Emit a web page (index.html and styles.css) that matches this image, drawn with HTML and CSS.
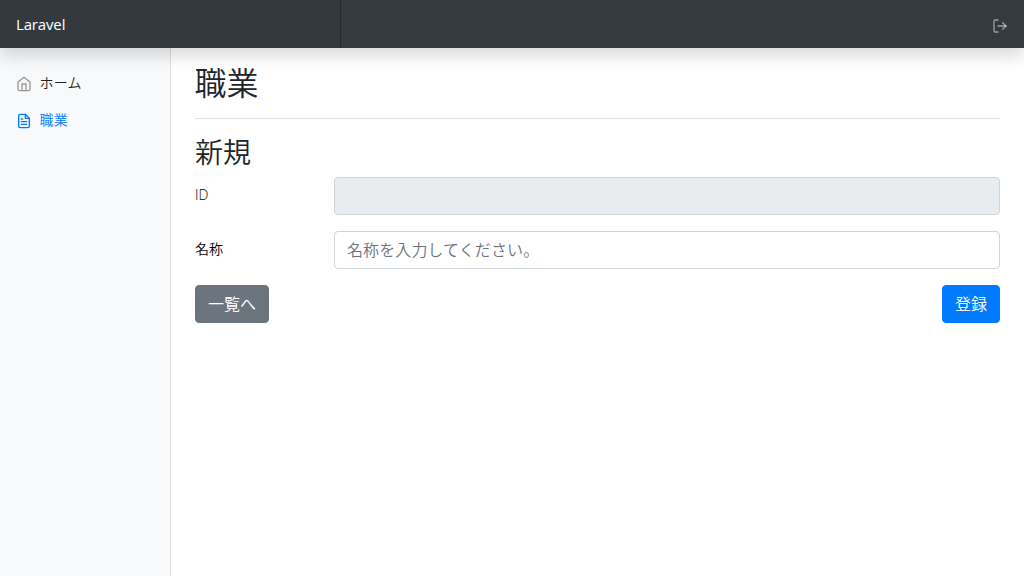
FILE: index.html
```html
<!DOCTYPE html>
<html lang="ja">
<head>
<meta charset="utf-8">
<title>Laravel</title>
<link rel="stylesheet" href="styles.css">
</head>
<body>
<nav class="navbar">
  <a class="brand">Laravel</a>
  <a class="logout" aria-label="Logout"><svg class="icon" viewBox="0 0 24 24"><path d="M9 21H5a2 2 0 0 1-2-2V5a2 2 0 0 1 2-2h4"/><polyline points="16 17 21 12 16 7"/><line x1="21" y1="12" x2="9" y2="12"/></svg></a>
</nav>
<div class="layout">
  <aside class="sidebar">
    <a class="nav-link"><svg class="icon" viewBox="0 0 24 24"><path d="M3 9l9-7 9 7v11a2 2 0 0 1-2 2H5a2 2 0 0 1-2-2z"/><polyline points="9 22 9 12 15 12 15 22"/></svg><span>ホーム</span></a>
    <a class="nav-link active"><svg class="icon" viewBox="0 0 24 24"><path d="M14 2H6a2 2 0 0 0-2 2v16a2 2 0 0 0 2 2h12a2 2 0 0 0 2-2V8z"/><polyline points="14 2 14 8 20 8"/><line x1="16" y1="13" x2="8" y2="13"/><line x1="16" y1="17" x2="8" y2="17"/><polyline points="10 9 9 9 8 9"/></svg><span>職業</span></a>
  </aside>
  <main class="main">
    <h1 class="title">職業</h1>
    <h2 class="subtitle">新規</h2>
    <form class="form">
      <div class="row"><label class="label" for="id">ID</label><input class="control" id="id" readonly></div>
      <div class="row"><label class="label" for="name">名称</label><input class="control" id="name" placeholder="名称を入力してください。"></div>
      <div class="actions"><button class="btn secondary" type="button">一覧へ</button><button class="btn primary" type="button">登録</button></div>
    </form>
  </main>
</div>
</body>
</html>
```
FILE: styles.css
```css
* { box-sizing: border-box; }
body { margin: 0; height: 100vh; overflow: hidden; display: flex; flex-direction: column; background: #fff; color: #212529; font-family: "Open Sans", "Noto Sans CJK JP", sans-serif; font-size: 14px; font-weight: 350; line-height: 21px; }
.navbar { position: relative; z-index: 1; display: flex; justify-content: space-between; flex: 0 0 48px; background: #343a40; box-shadow: 0 8px 16px rgba(0,0,0,.15); }
.brand { width: 341px; padding: 12px 16px; color: #fff; font-size: 15px; font-weight: 500; line-height: 24px; letter-spacing: -.15px; background: rgba(0,0,0,.01); box-shadow: inset -1px 0 0 rgba(0,0,0,.25); }
.logout { padding: 18px 16px 0; color: rgba(255,255,255,.5); }
.icon { display: block; width: 16px; height: 16px; fill: none; stroke: currentColor; stroke-width: 2; stroke-linecap: round; stroke-linejoin: round; }
.layout { display: flex; flex: 1; }
.sidebar { flex: 0 0 171px; padding-top: 16px; background: #f8f9fa; box-shadow: inset -1px 0 0 rgba(0,0,0,.1); }
.nav-link { display: flex; gap: 7.5px; height: 37px; padding: 8px 16px; color: #222; letter-spacing: .2px; }
.nav-link .icon { margin-top: 4px; color: #999; }
.nav-link.active, .active .icon { color: #007bff; }
.main { flex: 1; padding: 16px 24px 0; }
.title { margin: 0 0 16px; height: 55px; border-bottom: 1px solid #dee2e6; font-size: 32px; line-height: 38px; font-weight: 350; text-indent: -.5px; }
.subtitle { margin: 0 0 8px; font-size: 28px; line-height: 34px; font-weight: 350; }
.row { display: flex; margin-bottom: 16px; }
.label { width: 139px; padding-top: 7px; color: #000; }
.control { flex: 1; min-width: 0; height: 38px; padding: 6px 12px; border: 1px solid #ced4da; border-radius: 4px; background: #fff; font: inherit; font-size: 16px; line-height: 24px; letter-spacing: .1px; }
.control:read-only { background: #e9ecef; }
.control::placeholder { color: #6c757d; opacity: 1; }
.actions { display: flex; justify-content: space-between; }
.btn { height: 38px; padding: 6px 12px; border: 1px solid; border-radius: 4px; color: #fff; font: inherit; font-size: 16px; line-height: 24px; }
.secondary { background: #6c757d; border-color: #6c757d; }
.primary { background: #007bff; border-color: #007bff; }
```
